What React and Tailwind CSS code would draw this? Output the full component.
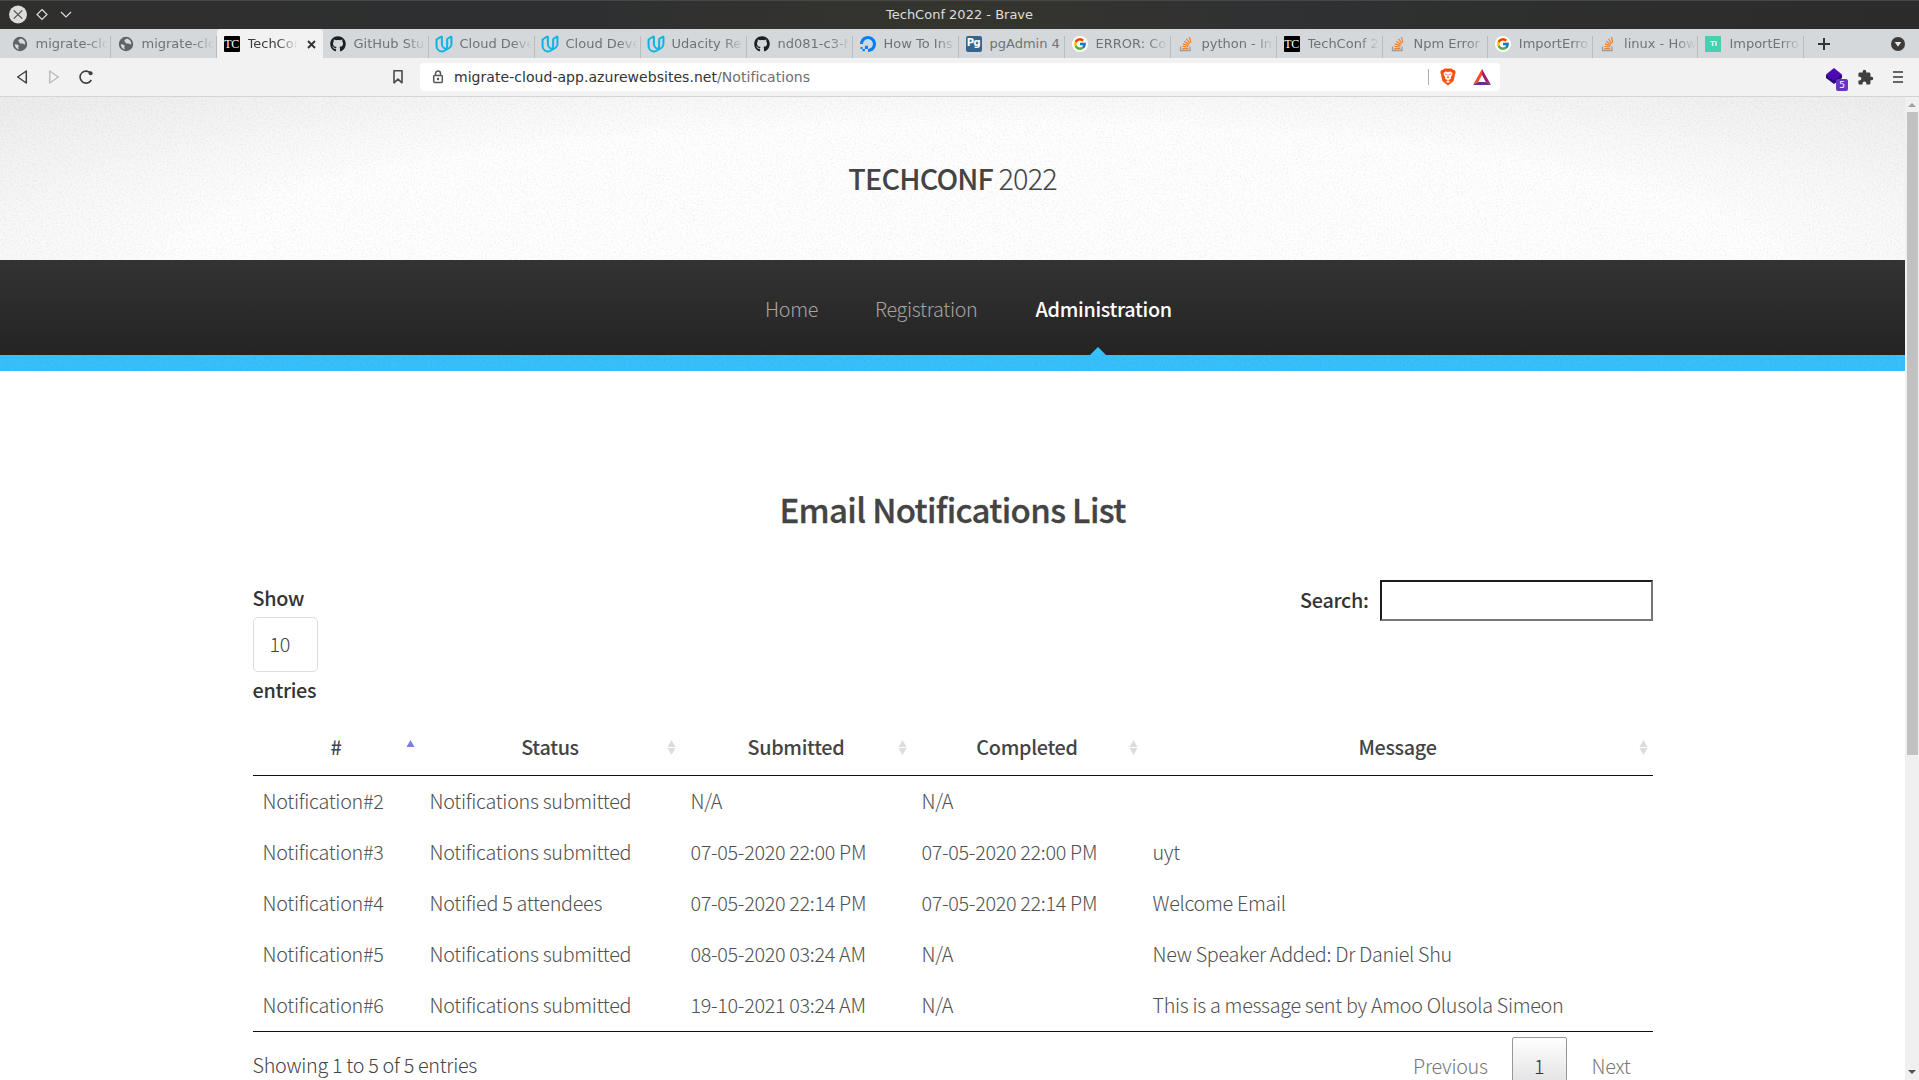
import React from "react";
import { SiUdacity, SiDigitalocean } from "react-icons/si";
import { FcGoogle } from "react-icons/fc";
import { FaGithub } from "react-icons/fa";
import { MdExtension } from "react-icons/md";

const Globe = () => (
  <svg width="16" height="16" viewBox="0 0 16 16">
    <circle cx="8" cy="8" r="7.2" fill="#5f6368" />
    <path d="M9 2.600c-1 1-2.600.8-2.700 2.100-.1 1.100 1.400.9 1.300 2-.1.900 1.500.8 2.700.8 1.200.1 1.300 1.100 2.900 1 .3-2.600-1.100-5-4.200-5.900zM2.800 8.200c1.300 0 2.900.1 3.700 1.200.7 1-.5 1.500-.3 2.400.1.600.7.900.7 1.600-2.400-.5-4-2.500-4.100-5.200z" fill="#d5d8db" />
  </svg>
);
const TechConfIcon = () => (
  <span className="flex h-4 w-4 items-center justify-center rounded-[1px] bg-black font-['Liberation_Serif'] text-[12px] leading-none tracking-[-0.5px] text-white">TC</span>
);
const Github = () => <FaGithub size={16} className="text-[#1b1f23]" />;
const Udacity = () => <SiUdacity size={16} className="overflow-visible text-[#02b3e4]" stroke="currentColor" strokeWidth="1.3" />;
const Ocean = () => <SiDigitalocean size={16} className="text-[#0080ff]" />;
const PgAdmin = () => (
  <span className="flex h-4 w-4 items-center justify-center rounded-[2px] bg-[#326690] pb-0.5 font-['DejaVu_Sans'] text-[10px] font-bold leading-none tracking-[-0.6px] text-white">Pg</span>
);
const Google = () => (
  <span className="flex h-4 w-4 items-center justify-center rounded-full bg-white"><FcGoogle size={14} /></span>
);
const Stack = () => (
  <svg width="16" height="16" viewBox="0 0 16 16" fill="none">
    <path d="M2.500 10.500v4h9.500v-4" stroke="#9a9c9f" strokeWidth="1.300" />
    <path d="M4.300 12.600h6M4.400 10.400l5.900.6M4.900 7.900l5.600 1.700M6.200 5.200l4.900 3.200M8.500 2.800l3.500 4.700M11.400 1l1.500 5.600" stroke="#f48024" strokeWidth="1.200" />
  </svg>
);
const Ti = () => (
  <span className="flex h-4 w-4 items-center justify-center rounded-[1px] bg-[#46cfb0] font-['Liberation_Sans'] text-[8px] font-bold leading-none text-white">Ti</span>
);

const tabs = [
  [Globe, "migrate-clo"],
  [Globe, "migrate-clo"],
  [TechConfIcon, "TechCon", true],
  [Github, "GitHub Stu"],
  [Udacity, "Cloud Deve"],
  [Udacity, "Cloud Deve"],
  [Udacity, "Udacity Re"],
  [Github, "nd081-c3-M"],
  [Ocean, "How To Ins"],
  [PgAdmin, "pgAdmin 4"],
  [Google, "ERROR: Co"],
  [Stack, "python - Im"],
  [TechConfIcon, "TechConf 2"],
  [Stack, "Npm Error"],
  [Google, "ImportErro"],
  [Stack, "linux - How"],
  [Ti, "ImportErro"],
];

function Tab({ icon: Icon, label, active, fade, narrow }) {
  return (
    <div className={`relative flex h-[29px] shrink-0 items-center pl-[7px] pt-[1px] ${narrow ? "w-[105.3px]" : "w-[106px]"} ${active ? "rounded-t-[4px] bg-[#f2f2f2]" : ""}`}>
      <span className="flex h-4 w-4 shrink-0 items-center justify-center"><Icon /></span>
      <span className={`ml-2 overflow-hidden whitespace-nowrap text-[13px] leading-4 ${active ? "w-[50px] text-[#3c3c3c]" : "w-[72px] text-[#6f7276]"} ${fade ? "[mask-image:linear-gradient(to_right,black_calc(100%-20px),transparent)]" : ""}`}>{label}</span>
      {active && (
        <svg width="9" height="9" viewBox="0 0 9 9" className="ml-[9px]"><path d="M1 1l7 7M8 1l-7 7" stroke="#333" strokeWidth="1.900" /></svg>
      )}
      {!active && <span className="absolute bottom-0 right-0 h-[22px] w-px bg-[#b9bbbe]" />}
    </div>
  );
}

function WindowBar() {
  return (
    <div className="flex h-[29px] items-center border-t border-[#454847] bg-[linear-gradient(to_right,#2f2f2e,#2e2f31_30%,#35352e_50%,#303132_65%,#2b2b2b)] pl-[9px]">
      <svg width="66" height="20" viewBox="0 0 66 20" fill="none">
        <circle cx="9" cy="9.500" r="9" fill="#dcdcdc" />
        <path d="M4.800 5.300l8.400 8.400M13.200 5.300l-8.400 8.400" stroke="#4a4a4a" strokeWidth="1.100" />
        <path d="M33 4.500l5 5-5 5-5-5z" stroke="#dcdcdc" strokeWidth="1.200" />
        <path d="M52 7l5 5 5-5" stroke="#dcdcdc" strokeWidth="1.200" />
      </svg>
      <span className="ml-[811px] whitespace-nowrap text-[13px] text-[#dedede]">TechConf 2022 - Brave</span>
    </div>
  );
}

function Toolbar() {
  return (
    <div className="flex h-[39px] items-center border-b border-[#d3d5d8] bg-[#f2f2f2]">
      <div className="flex w-[420px] items-center">
        <svg width="82" height="18" viewBox="0 0 82 18" fill="none" className="ml-4" strokeLinejoin="round">
          <path d="M10.300 3v12L1.700 9z" stroke="#3f3f3f" strokeWidth="1.500" />
          <path d="M33.700 3v12l8.600-6z" stroke="#bcbcbc" strokeWidth="1.500" />
          <path d="M75.300 12a6 6 0 1 1-.3-6.300" stroke="#3f3f3f" strokeWidth="1.600" />
          <circle cx="74.600" cy="5.200" r="2" fill="#3f3f3f" />
        </svg>
        <svg width="12" height="16" viewBox="0 0 12 16" fill="none" className="ml-[294px]">
          <path d="M2 1.800h8v12l-4-3.600-4 3.600z" stroke="#4a4a4a" strokeWidth="1.600" strokeLinejoin="round" />
        </svg>
      </div>
      <div className="flex h-7 w-[1080px] items-center rounded-[4px] bg-white pl-3">
        <svg width="12" height="14" viewBox="0 0 12 14" fill="none">
          <rect x="1.700" y="5.500" width="8.600" height="7" rx="1" stroke="#55575a" strokeWidth="1.500" />
          <path d="M3.500 5V3.600a2.500 2.500 0 0 1 5 0V5" stroke="#55575a" strokeWidth="1.500" />
          <circle cx="6" cy="9" r="1.200" fill="#55575a" />
        </svg>
        <span className="ml-2.5 whitespace-nowrap text-[14px] tracking-[0.045px] text-[#333]">migrate-cloud-app.azurewebsites.net<span className="text-[#6e6e6e]">/Notifications</span></span>
        <span className="ml-auto h-4 w-px bg-[#aeb0b3]" />
        <svg width="16" height="18" viewBox="0 0 16 18" className="ml-[11px]">
          <path d="M4.500.5h7L13.300 2l1.700.3.700 2-.5 1.500-1.600 7.200L8 17.500 2.400 13 .8 5.800.3 4.300l.7-2L2.700 2z" fill="#f9500f" />
          <path d="M8 4l2.200-.5 2.300 1.500-.3 1.800-1.400 2.400.2 1.400-1.700 1.200L8 12.100l-1.300-.3L5 10.600l.2-1.400-1.400-2.400L3.500 5l2.300-1.500z" fill="#fff" />
          <path d="M4.800 6l2 .6M11.200 6l-2 .6M8 6.500v3M6.500 10L8 9.300l1.500.7" stroke="#f9500f" strokeWidth=".8" fill="none" />
          <path d="M8 12.300l2 1.100-2 1.600-2-1.600z" fill="#fff" />
        </svg>
        <svg width="18" height="16" viewBox="0 0 18 16" className="ml-[17px] mr-[9px]">
          <path d="M9 0L0 16l5.200-3L9 6z" fill="#ff4724" />
          <path d="M9 0l9 16-5.200-3L9 6z" fill="#9e1f63" />
          <path d="M0 16h18l-5.200-3H5.200z" fill="#662d91" />
        </svg>
      </div>
      <div className="ml-[325px] flex items-center">
        <div className="relative h-6 w-6">
          <svg width="18" height="18" viewBox="0 0 18 18" className="absolute left-0 top-[2px]">
            <path d="M1 8v3l8 6 8-6V8z" fill="#2a0a78" />
            <path d="M9 1l8 6.500L9 14 1 7.500z" fill="#4c09b4" />
          </svg>
          <span className="absolute left-[11px] top-[14px] flex h-3 w-3 items-center justify-center rounded-[2px] bg-[#6b35bb] text-[9px] leading-none text-white">5</span>
        </div>
        <MdExtension size={17} className="ml-[8px] text-[#3f3f3f]" />
        <div className="ml-[18.500px] flex w-[10px] flex-col gap-[3px]">
          <span className="h-[2px] bg-[#666]" /><span className="h-[2px] bg-[#666]" /><span className="h-[2px] bg-[#666]" />
        </div>
      </div>
    </div>
  );
}

function Grain({ id, strength }) {
  return (
    <svg className="pointer-events-none absolute inset-0 h-full w-full" aria-hidden="true">
      <filter id={id} x="0" y="0" width="100%" height="100%">
        <feTurbulence type="fractalNoise" baseFrequency="0.55" numOctaves="2" seed="4" />
        <feColorMatrix values={`0 0 0 0 0  0 0 0 0 0  0 0 0 0 0  ${strength} 0 0 0 -${strength * 0.44}`} />
      </filter>
      <rect width="100%" height="100%" filter={`url(#${id})`} />
    </svg>
  );
}

const columns = ["#", "Status", "Submitted", "Completed", "Message"];
const rows = [
  ["Notification#2", "Notifications submitted", "N/A", "N/A", ""],
  ["Notification#3", "Notifications submitted", "07-05-2020 22:00 PM", "07-05-2020 22:00 PM", "uyt"],
  ["Notification#4", "Notified 5 attendees", "07-05-2020 22:14 PM", "07-05-2020 22:14 PM", "Welcome Email"],
  ["Notification#5", "Notifications submitted", "08-05-2020 03:24 AM", "N/A", "New Speaker Added: Dr Daniel Shu"],
  ["Notification#6", "Notifications submitted", "19-10-2021 03:24 AM", "N/A", "This is a message sent by Amoo Olusola Simeon"],
];
const grid = "grid grid-cols-[167px_261px_231px_231px_510px]";

function Sort({ active }) {
  return (
    <svg width="9" height="15" viewBox="0 0 9 15" className="absolute right-[5px] top-[21px]">
      <path d="M4.500 0L8.500 7H.5z" fill={active ? "#7b80df" : "#dcdcdc"} />
      {!active && <path d="M4.500 15L8.500 8H.5z" fill="#dcdcdc" />}
    </svg>
  );
}

function Page() {
  return (
    <div className="flex h-[983px] w-[1905px] flex-col overflow-hidden bg-white font-['Noto_Sans_CJK_SC',sans-serif] text-[19.8px] font-light tracking-[-0.31px] text-[#505050]">
      <header className="relative flex h-[163px] shrink-0 items-center justify-center bg-[radial-gradient(ellipse_1150px_200px_at_51%_100%,#fefefe_68%,#ececec_115%)] pb-px">
        <Grain id="grain-header" strength={0.12} />
        <h1 className="relative text-[28.8px] leading-none tracking-[-0.85px] text-[#444]"><span className="font-medium">TECHCONF</span> 2022</h1>
      </header>
      <nav className="relative flex h-[95px] shrink-0 items-center bg-[linear-gradient(#333,#242424)] pl-[765px] pt-[2px] text-[#a4a4a4]">
        <span className="w-[110px]">Home</span>
        <span className="w-[160.5px]">Registration</span>
        <span className="font-medium text-white">Administration</span>
        <span className="absolute bottom-0 left-[1090px] h-2 w-4 bg-[#37c0fb] [clip-path:polygon(50%_0,100%_100%,0_100%)]" />
      </nav>
      <div className="relative h-4 shrink-0 bg-[#37c0fb]"><Grain id="grain-stripe" strength={0.12} /></div>

      <main className="mx-auto w-[1400px] pt-[114px]">
        <h2 className="text-center text-[33px] font-medium leading-[48px] tracking-[-0.65px] text-[#444] [-webkit-text-stroke:0.3px_#444]">Email Notifications List</h2>

        <div className="mt-[47px] flex h-[139px] items-start justify-between font-medium text-[#333]">
          <div className="flex flex-col">
            <span className="mt-px h-[36px] leading-[34px]">Show</span>
            <span className="flex h-[55px] w-[65px] items-center rounded-[5px] border border-[#dedede] pb-0.5 pl-4 font-light text-[#444]">10</span>
            <span className="leading-[36px]">entries</span>
          </div>
          <div className="flex items-center">
            <span className="pb-0.5">Search:</span>
            <input aria-label="Search" className="ml-[11px] h-[41px] w-[273px] border-2 border-b-[#767676] border-l-[#1c1c1c] border-r-[#767676] border-t-[#1c1c1c] bg-white" />
          </div>
        </div>

        <div className={`${grid} h-[57px] border-b border-[#111] font-medium text-[#444]`}>
          {columns.map((c, i) => (
            <div key={c} className="relative flex items-center justify-center">{c}<Sort active={i === 0} /></div>
          ))}
        </div>
        <div className="border-b border-[#111]">
          {rows.map((r) => (
            <div key={r[0]} className={`${grid} h-[51px] items-center pb-0.5`}>
              {r.map((v, i) => <span key={i} className="whitespace-nowrap pl-2.5">{v}</span>)}
            </div>
          ))}
        </div>

        <div className="flex items-start justify-between pt-[5px]">
          <span className="leading-[56px] text-[#444]">Showing 1 to 5 of 5 entries</span>
          <div className="flex items-center text-[#777]">
            <span className="mr-6">Previous</span>
            <span className="flex h-[57px] w-[55px] items-center justify-center rounded-[2px] border border-[#979797] bg-[linear-gradient(#fff,#dcdcdc)] text-[#333]">1</span>
            <span className="ml-[25px] mr-[22px]">Next</span>
          </div>
        </div>
      </main>
    </div>
  );
}

export default function App() {
  return (
    <div className="h-[1080px] w-[1919px] overflow-hidden bg-white font-['DejaVu_Sans',sans-serif]">
      <WindowBar />
      <div className="flex h-[29px] bg-[#d5d8db] pl-[4.500px]">
        {tabs.map(([icon, label, active], i) => (
          <Tab key={i} icon={icon} label={label} active={active} narrow={i > 12} fade={label !== "pgAdmin 4"} />
        ))}
        <div className="flex flex-1 items-center justify-between pl-[14px] pr-[14px] pt-px">
          <svg width="12" height="12" viewBox="0 0 12 12"><path d="M6 0v12M0 6h12" stroke="#333" strokeWidth="2" /></svg>
          <svg width="14" height="14" viewBox="0 0 14 14"><circle cx="7" cy="7" r="7" fill="#3a3a3a" /><path d="M3.700 5h6.600L7 9.800z" fill="#e4e6e8" /></svg>
        </div>
      </div>
      <Toolbar />
      <div className="flex">
        <Page />
        <div className="flex h-[983px] w-[14px] flex-col items-center bg-[#f0f0f0]">
          <svg width="8" height="15" viewBox="0 0 8 15"><path d="M0 10h8L4 6z" fill="#a0a0a0" /></svg>
          <div className="ml-px h-[643px] w-[11px] bg-[#c1c1c1]" />
          <svg width="8" height="15" viewBox="0 0 8 15" className="mt-auto"><path d="M0 5h8l-4 4z" fill="#505050" /></svg>
        </div>
      </div>
    </div>
  );
}
